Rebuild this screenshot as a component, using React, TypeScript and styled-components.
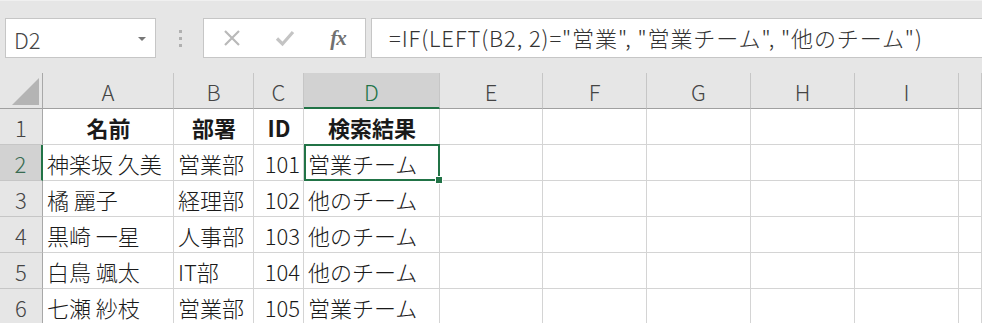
import React from 'react';
import styled, {createGlobalStyle, css} from 'styled-components';

const GREEN = '#217346';

const GlobalStyle = createGlobalStyle`
  html, body {
    margin: 0;
    padding: 0;
    background: #ffffff;
    overflow: hidden;
  }
  body {
    font-family: "Noto Sans CJK JP", "Noto Sans", sans-serif;
  }
`;

const columns = [
  {key: 'A', width: 131},
  {key: 'B', width: 80},
  {key: 'C', width: 50},
  {key: 'D', width: 136},
  {key: 'E', width: 103},
  {key: 'F', width: 104},
  {key: 'G', width: 104},
  {key: 'H', width: 104},
  {key: 'I', width: 104},
  {key: '', width: 0},
];

type Align = 'left' | 'right' | 'center';

const rows: {id: number; cells: string[]; bold?: boolean}[] = [
  {id: 1, cells: ['名前', '部署', 'ID', '検索結果'], bold: true},
  {id: 2, cells: ['神楽坂 久美', '営業部', '101', '営業チーム']},
  {id: 3, cells: ['橘 麗子', '経理部', '102', '他のチーム']},
  {id: 4, cells: ['黒崎 一星', '人事部', '103', '他のチーム']},
  {id: 5, cells: ['白鳥 颯太', 'IT部', '104', '他のチーム']},
  {id: 6, cells: ['七瀬 紗枝', '営業部', '105', '営業チーム']},
];

export default function App() {
  return (
    <>
      <GlobalStyle/>
      <Window>
        <FormulaBar>
          <NameBox>
            D2
            <Caret/>
          </NameBox>
          <Grip>
            <Dot/><Dot/><Dot/>
          </Grip>
          <ButtonGroup>
            <ToolButton>
              <svg width="18" height="18" viewBox="0 0 18 18">
                <path d="M2 2 L16 16 M16 2 L2 16" stroke="#b9b9b9" strokeWidth="2.2" fill="none"/>
              </svg>
            </ToolButton>
            <ToolButton>
              <svg width="20" height="18" viewBox="0 0 20 18">
                <path d="M2 9.5 L7.5 15 L18 3" stroke="#c4c4c4" strokeWidth="3.2" fill="none"/>
              </svg>
            </ToolButton>
            <ToolButton>
              <Fx>fx</Fx>
            </ToolButton>
          </ButtonGroup>
          <FormulaInput>=IF(LEFT(B2, 2)="営業", "営業チーム", "他のチーム")</FormulaInput>
        </FormulaBar>

        <Sheet>
          <Corner><CornerTriangle/></Corner>
          {columns.map(col =>
            <ColHeader key={col.key || 'rest'} $active={col.key === 'D'}>{col.key}</ColHeader>
          )}
          {rows.map(row => (
            <React.Fragment key={row.id}>
              <RowHeader $active={row.id === 2}>{row.id}</RowHeader>
              {columns.map((col, i) => {
                const value = row.cells[i] ?? '';
                const align: Align = row.bold ? 'center' : col.key === 'C' ? 'right' : 'left';
                return (
                  <Cell
                    key={col.key || 'rest'}
                    $align={align}
                    $bold={row.bold}
                    $selected={row.id === 2 && col.key === 'D'}
                  >
                    {value}
                  </Cell>
                );
              })}
            </React.Fragment>
          ))}
        </Sheet>
      </Window>
    </>
  );
}

const Window = styled.div`
  width: 982px;
  height: 323px;
  overflow: hidden;
  background: #e6e6e6;
`;

const FormulaBar = styled.div`
  display: flex;
  align-items: stretch;
  height: 73px;
  box-sizing: border-box;
  padding: 17px 0 15px 5px;
  border-top: 1px solid #f0f0f0;
`;

const NameBox = styled.div`
  position: relative;
  display: flex;
  align-items: center;
  width: 151px;
  box-sizing: border-box;
  padding: 2px 0 0 8px;
  background: #fff;
  border: 1px solid #c6c6c6;
  font-size: 22px;
  font-weight: 300;
  color: #444;
`;

const Caret = styled.span`
  position: absolute;
  right: 9px;
  top: 18px;
  border-left: 4px solid transparent;
  border-right: 4px solid transparent;
  border-top: 4px solid #777;
`;

const Grip = styled.div`
  width: 46px;
  display: flex;
  flex-direction: column;
  align-items: center;
  justify-content: center;
  gap: 4px;
  padding-left: 1px;
`;

const Dot = styled.span`
  width: 3px;
  height: 3px;
  background: #b0b0b0;
`;

const ButtonGroup = styled.div`
  display: flex;
  align-items: center;
  width: 163px;
  box-sizing: border-box;
  background: #fff;
  border: 1px solid #c6c6c6;
  padding: 0 8px 0 9px;
  justify-content: space-between;
`;

const ToolButton = styled.div`
  width: 38px;
  display: flex;
  align-items: center;
  justify-content: center;
`;

const Fx = styled.span`
  font-family: "Liberation Serif", serif;
  font-style: italic;
  font-weight: bold;
  font-size: 21px;
  color: #707070;
  letter-spacing: -1px;
`;

const FormulaInput = styled.div`
  flex: 1;
  margin-left: 5px;
  display: flex;
  align-items: center;
  padding: 0 0 2px 17px;
  background: #fff;
  border: 1px solid #c6c6c6;
  border-right: none;
  font-size: 22px;
  font-weight: 300;
  letter-spacing: 0.9px;
  color: #333;
  white-space: nowrap;
`;

const Sheet = styled.div`
  display: grid;
  grid-template-columns: 43px ${columns.filter(c => c.width).map(c => `${c.width}px`).join(' ')} 1fr;
  grid-auto-rows: 36px;
  background: #fff;
`;

const headerBase = css`
  display: flex;
  align-items: center;
  justify-content: center;
  box-sizing: border-box;
  background: #e6e6e6;
  color: #444;
  font-size: 22px;
  font-weight: 300;
`;

const Corner = styled.div`
  ${headerBase};
  position: relative;
  border-right: 1px solid #a8a8a8;
  border-bottom: 1px solid #a0a0a0;
`;

const CornerTriangle = styled.span`
  position: absolute;
  right: 3px;
  bottom: 3px;
  width: 0;
  height: 0;
  border-left: 27px solid transparent;
  border-bottom: 27px solid #b4b4b4;
`;

const ColHeader = styled.div<{$active?: boolean}>`
  ${headerBase};
  padding-top: 1px;
  border-right: 1px solid #c6c6c6;
  border-bottom: 1px solid #a0a0a0;
  ${({$active}) => $active && css`
    background: #d2d2d2;
    color: ${GREEN};
    border-bottom: 2px solid ${GREEN};
  `}
`;

const RowHeader = styled.div<{$active?: boolean}>`
  ${headerBase};
  border-right: 1px solid #a8a8a8;
  border-bottom: 1px solid #c6c6c6;
  ${({$active}) => $active && css`
    background: #d2d2d2;
    color: #386b51;
    border-right: 2px solid ${GREEN};
  `}
`;

const Cell = styled.div<{$align: Align; $bold?: boolean; $selected?: boolean}>`
  position: relative;
  display: flex;
  align-items: center;
  justify-content: ${({$align}) => $align === 'right' ? 'flex-end' : $align === 'center' ? 'center' : 'flex-start'};
  box-sizing: border-box;
  padding: 1px 3px 0 4px;
  border-right: 1px solid #d4d4d4;
  border-bottom: 1px solid #d4d4d4;
  font-size: 22px;
  font-weight: ${({$bold}) => $bold ? 700 : 300};
  color: #1a1a1a;
  white-space: nowrap;
  ${({$selected}) => $selected && css`
    &::after {
      content: '';
      position: absolute;
      top: -1px;
      left: 0;
      right: -1px;
      bottom: -1px;
      border: 2px solid ${GREEN};
    }
    &::before {
      content: '';
      position: absolute;
      right: -4px;
      bottom: -4px;
      width: 6px;
      height: 6px;
      background: ${GREEN};
      border: 1px solid #fff;
      z-index: 1;
    }
  `}
`;
